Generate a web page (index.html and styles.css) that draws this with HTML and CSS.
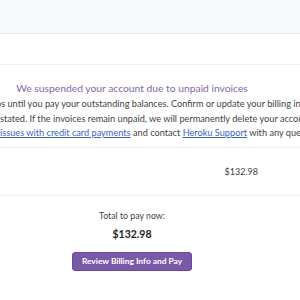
FILE: index.html
```html
<!DOCTYPE html>
<html lang="en">
<head>
  <meta charset="UTF-8" />
  <title>Account Suspended</title>
  <link rel="stylesheet" href="styles.css">
</head>
<body>
  <div class="topbar"></div>
  <div class="subbar"></div>

  <div class="main">
    <h2>We suspended your account due to unpaid invoices</h2>
    <div class="notice">
      <span class="line">We stopped all apps until you pay your outstanding balances. Confirm or update your billing information</span>
      <span class="line">and get reinstated. If the invoices remain unpaid, we will permanently delete your account</span>
      <span class="line">Read <a href="#">resolving issues with credit card payments</a> and contact <a href="#">Heroku Support</a> with any questions</span>
    </div>

    <div class="invoice-row">
      <span class="amount">$132.98</span>
    </div>

    <div class="total">
      <p class="total-label">Total to pay now:</p>
      <p class="total-value">$132.98</p>
      <button class="pay-btn">Review Billing Info and Pay</button>
    </div>
  </div>
</body>
</html>
```

FILE: styles.css
```css
html, body {
  margin: 0;
  padding: 0;
  width: 300px;
  height: 300px;
  overflow: hidden;
  background: #fff;
  font-family: Lato, 'Open Sans', sans-serif;
  color: #3f3f44;
}
.topbar {
  height: 33px;
  background: #f7f8fb;
  border-bottom: 1px solid #e7e9ef;
}
.subbar {
  height: 30px;
  border-bottom: 1px solid #eef0f3;
}
.main {
  width: 600px;
  margin-left: -168px;
}
h2 {
  margin: 16px 0 0;
  text-align: center;
  font-size: 10.3px;
  font-weight: normal;
  line-height: 15px;
  color: #8466ad;
}
.notice {
  margin-top: 1px;
  padding-bottom: 6px;
  border-bottom: 1px solid #eef0f3;
  text-align: center;
  font-size: 9.2px;
  line-height: 14.5px;
}
.line {
  display: block;
  white-space: nowrap;
}
.notice a {
  color: #3e63c4;
}
.invoice-row {
  display: flex;
  justify-content: flex-end;
  align-items: center;
  height: 47px;
  padding-right: 174px;
  border-bottom: 1px solid #eef0f3;
  font-size: 9px;
}
.total {
  display: flex;
  flex-direction: column;
  align-items: center;
  padding-top: 13px;
}
.total-label {
  margin: 0;
  font-size: 8.8px;
  line-height: 14px;
}
.total-value {
  margin: 3px 0 0;
  font-size: 10.5px;
  font-weight: bold;
  line-height: 16px;
  color: #222;
}
.pay-btn {
  margin-top: 10px;
  width: 120px;
  height: 19px;
  padding: 0;
  border: 1px solid #6a4b98;
  border-radius: 3px;
  background-color: #7a59a9;
  color: #fff;
  font-family: inherit;
  font-size: 8.4px;
  font-weight: bold;
}
```
